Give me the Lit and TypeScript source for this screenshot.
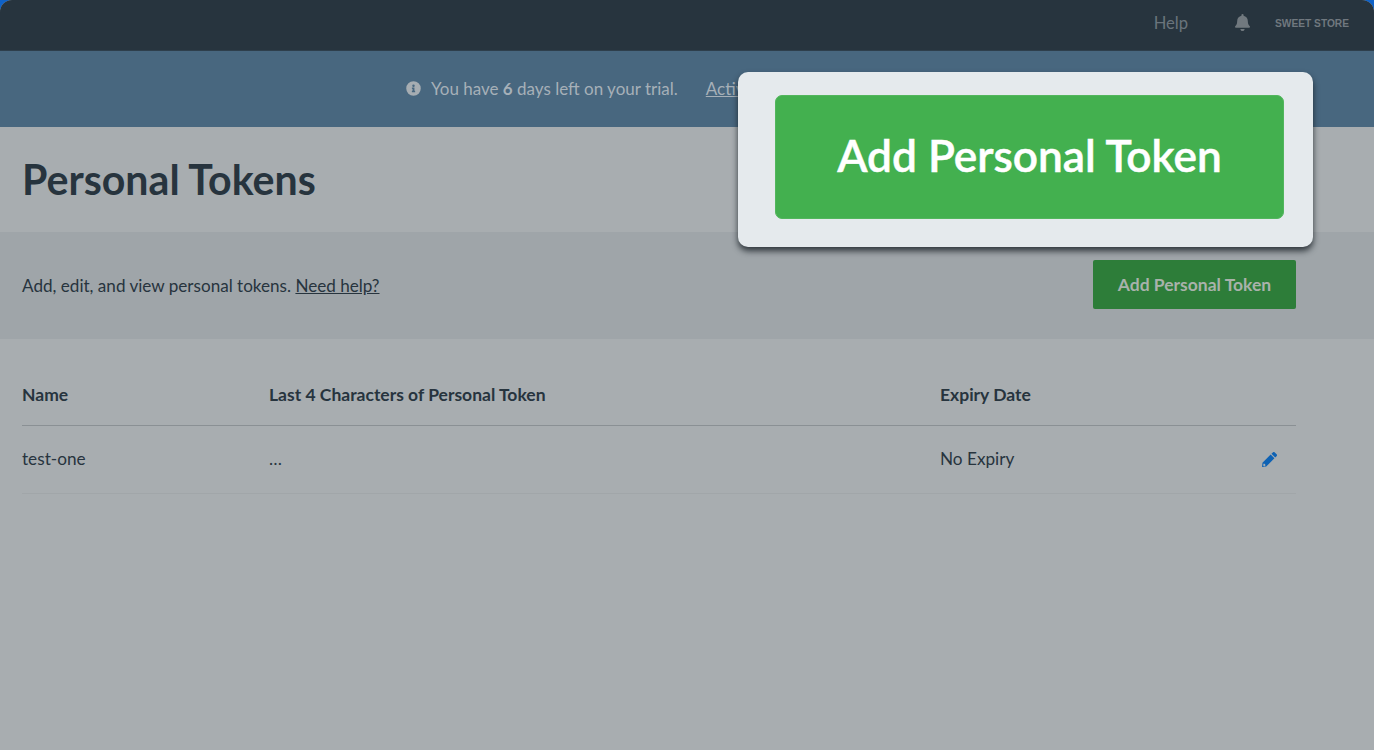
import { LitElement, html, css } from "lit";
import { customElement } from "lit/decorators.js";

@customElement("app-root")
export class AppRoot extends LitElement {
  static styles = css`
    :host { display: block; width: 1374px; height: 750px; position: relative; overflow: hidden; background: #0f62c8; font-family: Lato, "Liberation Sans", sans-serif; color: #27343e; }
    .window { height: 750px; border-radius: 12px 12px 0 0; overflow: hidden; background: #a8adb0; display: flex; flex-direction: column; }
    .top { height: 51px; flex: none; background: #27343e; display: flex; align-items: center; justify-content: flex-end; padding: 0 25px 4px 0; box-sizing: border-box; border-bottom: 1px solid #2e3f4c; }
    .help { font-size: 16.6px; color: #6a747c; margin-right: 46px; }
    .bell { width: 17px; height: 17px; margin-right: 24px; margin-top: -2px; fill: #71797f; }
    .store { font-family: "Liberation Sans", sans-serif; font-size: 10.2px; font-weight: 700; color: #70787f; }
    .banner { height: 76px; flex: none; background: #48677f; display: flex; align-items: center; padding-left: 406px; box-sizing: border-box; color: #a6b0b8; font-size: 17px; padding-bottom: 2px; }
    .banner svg { width: 15px; height: 15px; fill: #a6adb2; margin-right: 10px; }
    .banner b { font-weight: 700; }
    .banner a { margin-left: 28px; text-decoration: underline; white-space: nowrap; }
    .title { height: 105px; flex: none; display: flex; align-items: center; padding: 0 0 2px 22px; box-sizing: border-box; }
    h1 { margin: 0; font-size: 41.1px; font-weight: 700; color: #27343e; }
    .band { height: 107px; flex: none; background: #9fa5a9; display: flex; align-items: center; justify-content: space-between; padding: 0 78px 0 22px; box-sizing: border-box; font-size: 17.1px; }
    .band a { text-decoration: underline; }
    .btn { width: 203px; height: 49px; margin-top: -2px; background: #2d7d39; border-radius: 2px; display: flex; align-items: center; justify-content: center; color: #a9b2ab; font-size: 17.5px; font-weight: 700; }
    .table { margin: 0 78px 0 22px; font-size: 17.2px; }
    .row { display: grid; grid-template-columns: 247px 671px 1fr 34px; align-items: center; }
    .head { height: 87px; padding-top: 24px; font-weight: 700; font-size: 17.5px; border-bottom: 1px solid #8a9094; box-sizing: border-box; }
    .item { height: 68px; padding-bottom: 2px; border-bottom: 1px solid #a1a6a9; box-sizing: border-box; }
    .edit { width: 15px; height: 15px; margin-top: 2px; fill: #0e62b4; }
    .callout { position: absolute; left: 738px; top: 72px; width: 575px; height: 175px; background: #e5eaed; border-radius: 10px; box-shadow: 0 4px 6px rgba(20,28,34,.8); display: flex; align-items: flex-start; padding: 23px 29px 28px 37px; box-sizing: border-box; }
    .big { width: 509px; height: 124px; background: #43b04f; border: 1px solid #52b65d; border-radius: 7px; display: flex; align-items: center; justify-content: center; padding-bottom: 6px; box-sizing: border-box; color: #fff; font-size: 44.2px; font-weight: 600; -webkit-text-stroke: 0.5px #fff; }
  `;

  render() {
    return html`
      <div class="window">
        <div class="top">
          <span class="help">Help</span>
          <svg class="bell" viewBox="0 0 448 512"><path d="M224 512c35 0 64-29 64-64H160c0 35 29 64 64 64zm215-150c-19-21-55-52-55-154 0-78-54-140-128-155V32a32 32 0 1 0-64 0v21C118 68 64 130 64 208c0 102-36 133-55 154-6 6-9 14-9 22 0 16 13 32 32 32h384c19 0 32-16 32-32 0-8-3-16-9-22z"/></svg>
          <span class="store">SWEET STORE</span>
        </div>
        <div class="banner">
          <svg viewBox="0 0 512 512"><path d="M256 8a248 248 0 1 0 0 496 248 248 0 0 0 0-496zm0 110a42 42 0 1 1 0 84 42 42 0 0 1 0-84zm56 254c0 7-5 12-12 12h-88c-7 0-12-5-12-12v-24c0-7 5-12 12-12h12v-64h-12c-7 0-12-5-12-12v-24c0-7 5-12 12-12h64c7 0 12 5 12 12v100h12c7 0 12 5 12 12v24z"/></svg>
          <span>You have <b>6</b> days left on your trial.</span>
          <a>Activate</a>
        </div>
        <div class="title"><h1>Personal Tokens</h1></div>
        <div class="band">
          <span>Add, edit, and view personal tokens. <a>Need help?</a></span>
          <div class="btn">Add Personal Token</div>
        </div>
        <div class="table">
          <div class="row head"><span>Name</span><span>Last 4 Characters of Personal Token</span><span>Expiry Date</span><span></span></div>
          <div class="row item"><span>test-one</span><span>…</span><span>No Expiry</span>
            <svg class="edit" viewBox="0 0 512 512"><path d="M497 75 437 15a48 48 0 0 0-68 0l-46 46 128 128 46-46a48 48 0 0 0 0-68zM296 88 16 368 0 512l144-16 280-280L296 88zM62 392l40 18 18 40-30 34-42-8-8-42 22-42z"/></svg>
          </div>
        </div>
      </div>
      <div class="callout"><div class="big">Add Personal Token</div></div>
    `;
  }
}
